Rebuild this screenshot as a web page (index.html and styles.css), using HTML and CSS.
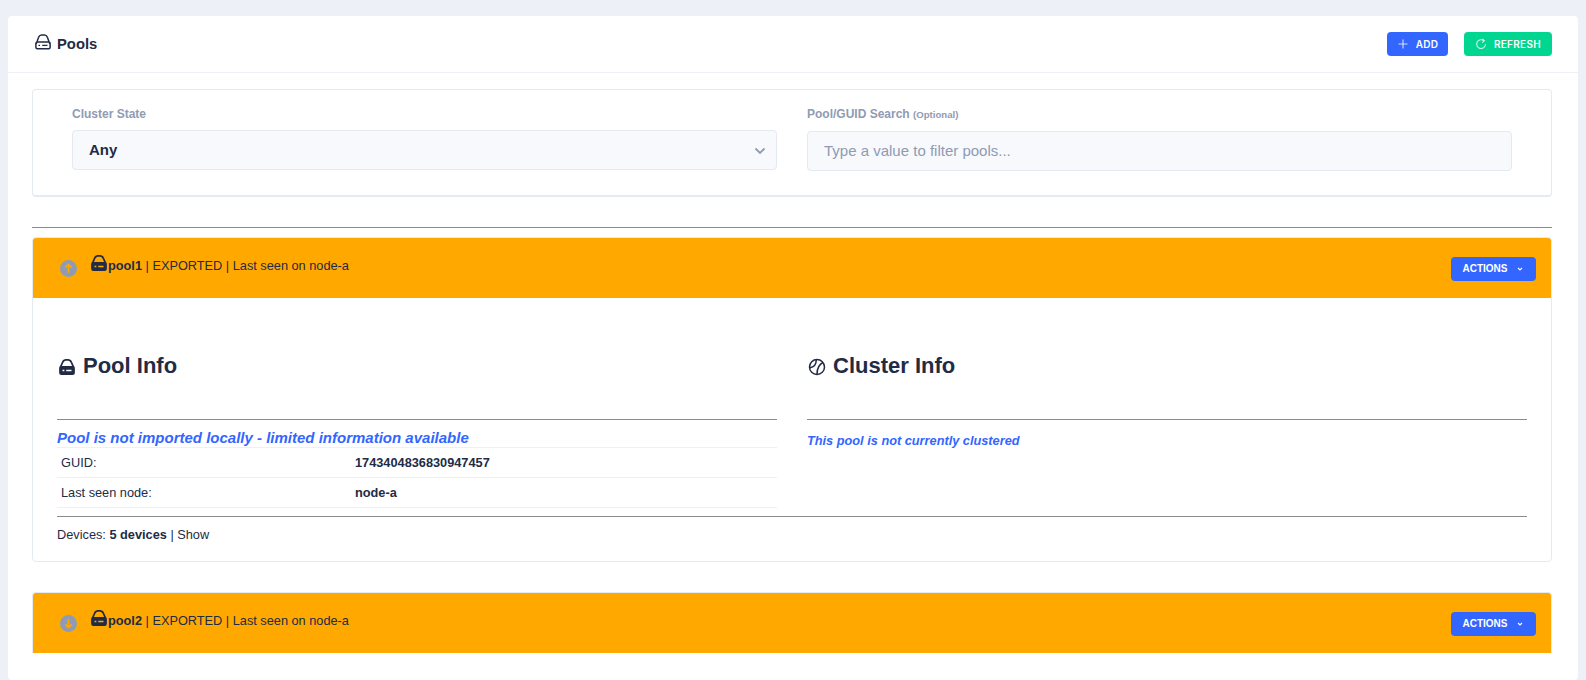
FILE: index.html
```html
<!DOCTYPE html>
<html lang="en">
<head>
<meta charset="utf-8">
<title>Pools</title>
<link rel="stylesheet" href="styles.css">
</head>
<body>
<svg class="defs" width="0" height="0" aria-hidden="true">
  <symbol id="drive-o" viewBox="0 0 24 24">
    <path fill="none" stroke="currentColor" stroke-width="2" d="M3 14.500 6 6A5 5 0 0 1 10 2.500h4A5 5 0 0 1 18 6L21 14.500M4.500 12h15a2 2 0 0 1 2 2v5a2 2 0 0 1-2 2h-15a2 2 0 0 1-2-2v-5a2 2 0 0 1 2-2Z"/>
    <path fill="currentColor" d="M6 15.700h2v1.600H6zM11 15.700h7v1.600h-7z"/>
  </symbol>
  <symbol id="drive-f" viewBox="0 0 24 24">
    <path fill="none" stroke="currentColor" stroke-width="2.400" d="M3 13 6 6A5 5 0 0 1 10 2.500h4A5 5 0 0 1 18 6L21 13"/>
    <path fill="currentColor" fill-rule="evenodd" d="M4.500 10.500h15a3 3 0 0 1 3 3v6a3 3 0 0 1-3 3h-15a3 3 0 0 1-3-3v-6a3 3 0 0 1 3-3Zm1.500 5.200v1.800h2.500v-1.800Zm5 0v1.800h7v-1.800Z"/>
  </symbol>
</svg>
<main class="shell">
  <header class="shell-head">
    <h1 class="page-title"><svg class="ico-title"><use href="#drive-o"/></svg>Pools</h1>
    <div class="head-actions">
      <button class="btn btn-blue btn-add"><svg class="btn-ico" viewBox="0 0 12 12"><path d="M6 1.500v9M1.500 6h9"/></svg>ADD</button>
      <button class="btn btn-green btn-refresh"><svg class="btn-ico btn-ico-r" viewBox="0 0 12 12"><path d="M10.500 6.200A4.400 4.400 0 1 1 8.900 2.700"/><path d="M7.400 .8 9.300 2.800 7.300 4.600"/></svg>REFRESH</button>
    </div>
  </header>

  <div class="shell-body">
    <section class="filters">
      <div class="field">
        <label class="field-label">Cluster State</label>
        <div class="select"><span class="select-value">Any</span><svg class="chev" viewBox="0 0 12 12"><path d="M1.500 3.500 6 8 10.500 3.500"/></svg></div>
      </div>
      <div class="field field-search">
        <label class="field-label">Pool/GUID Search <small>(Optional)</small></label>
        <div class="input"><span class="input-hint">Type a value to filter pools...</span></div>
      </div>
    </section>

    <hr class="rule rule-top">

    <article class="pool">
      <div class="pool-bar">
        <span class="toggle"><svg viewBox="0 0 16 16"><path d="M8 12V4.500M5 7.200 8 4.200 11 7.200"/></svg></span>
        <span class="pool-line"><svg class="ico-pool"><use href="#drive-f"/></svg><b>pool1</b> | EXPORTED | Last seen on node-a</span>
        <button class="btn btn-blue btn-actions">ACTIONS<svg class="btn-chev" viewBox="0 0 10 10"><path d="M3 4 5 6 7 4"/></svg></button>
      </div>
      <div class="pool-body">
        <div class="cols">
          <div class="col">
            <h2 class="col-title"><svg class="ico-h"><use href="#drive-f"/></svg>Pool Info</h2>
            <hr class="rule">
            <div class="note note-lg">Pool is not imported locally - limited information available</div>
            <table class="info">
              <tr><td>GUID:</td><td><b>1743404836830947457</b></td></tr>
              <tr><td>Last seen node:</td><td><b>node-a</b></td></tr>
            </table>
          </div>
          <div class="col">
            <h2 class="col-title"><svg class="ico-h ico-c" viewBox="0 0 24 24"><circle cx="12" cy="12" r="10"/><path d="M11 2.500C11 8 8 12 2.500 13M20 6C14 9 12 15 12 21.500"/></svg>Cluster Info</h2>
            <hr class="rule">
            <div class="note">This pool is not currently clustered</div>
          </div>
        </div>
        <hr class="rule rule-devices">
        <p class="devices">Devices: <b>5 devices</b> | Show</p>
      </div>
    </article>

    <article class="pool pool-closed">
      <div class="pool-bar">
        <span class="toggle"><svg viewBox="0 0 16 16"><path d="M8 4v7.500M5 8.800 8 11.800 11 8.800"/></svg></span>
        <span class="pool-line"><svg class="ico-pool"><use href="#drive-f"/></svg><b>pool2</b> | EXPORTED | Last seen on node-a</span>
        <button class="btn btn-blue btn-actions">ACTIONS<svg class="btn-chev" viewBox="0 0 10 10"><path d="M3 4 5 6 7 4"/></svg></button>
      </div>
    </article>
  </div>
</main>
</body>
</html>
```
FILE: styles.css
```css
* { box-sizing: border-box; }
html, body { height: 100%; margin: 0; overflow: hidden; }
body {
  background: #edf1f7;
  color: #222b45;
  font-family: "Liberation Sans", Arial, sans-serif;
  padding: 16px 8px 0;
}
.defs { position: absolute; }
.shell { background: #fff; border-radius: 4px; height: 100%; box-shadow: 0 0 1px #e4e9f2; }
.shell-head {
  height: 57px;
  padding: 0 26px;
  display: flex;
  align-items: center;
  justify-content: space-between;
  border-bottom: 1px solid #edf1f7;
}
.page-title { margin: 0; font-size: 14.800px; font-weight: 700; display: flex; align-items: center; }
.ico-title { width: 18px; height: 18px; margin-right: 5px; margin-top: -4px; color: #222b45; }
.head-actions { display: flex; gap: 16px; margin-bottom: 0; }
.btn {
  height: 24px;
  border: 0;
  border-radius: 4px;
  color: #fff;
  font-family: Inter, "Liberation Sans", sans-serif;
  font-size: 10px;
  font-weight: 600;
  letter-spacing: .3px;
  padding: 0;
  display: inline-flex;
  align-items: center;
  justify-content: center;
}
.btn-blue { background: #3366ff; }
.btn-green { background: #00d68f; }
.btn-add { width: 61px; }
.btn-refresh { width: 88px; }
.btn-ico { width: 12px; height: 12px; margin-right: 7px; fill: none; stroke: rgba(255,255,255,.8); stroke-width: 1.100; }
.shell-body { padding: 16px 26px 0 24px; }
.filters {
  height: 108px;
  border: 1px solid #e4e9f2;
  border-bottom-width: 2px;
  border-radius: 4px;
  padding: 16px 39px 0;
  display: grid;
  grid-template-columns: 705px 705px;
  column-gap: 30px;
}
.field-label { display: block; font-size: 12px; font-weight: 700; color: #8f9bb3; line-height: 16px; margin-bottom: 8px; }
.field-label small { font-size: 9.600px; }
.select, .input {
  height: 40px;
  background: #f7f9fc;
  border: 1px solid #e4e9f2;
  border-radius: 4px;
  padding: 0 16px;
  display: flex;
  align-items: center;
  font-size: 15px;
}
.select { font-weight: 700; justify-content: space-between; }
.select-value { margin-top: -2px; }
.input { color: #8f9bb3; margin-top: 1px; }
.input-hint { margin-top: -2px; }
.chev { width: 12px; height: 12px; fill: none; stroke: #8f9bb3; stroke-width: 1.800; margin: 2px -6px 0 0; }
.rule { border: 0; border-top: 1px solid #8c8c8c; margin: 0; }
.rule-top { margin: 30px 0 9px; }
.pool { border: 1px solid #e4e9f2; border-radius: 4px; overflow: hidden; }
.pool-bar {
  height: 60px;
  background: #ffa900;
  display: flex;
  align-items: center;
  padding: 0 15px 0 27px;
  font-size: 12.750px;
}
.toggle {
  width: 17px;
  height: 17px;
  border-radius: 50%;
  background: #8f9bb3;
  margin-right: 13px;
  flex: none;
}
.toggle svg { display: block; width: 17px; height: 17px; fill: none; stroke: #ffa900; stroke-width: 1.500; }
.pool-line { display: flex; align-items: center; white-space: pre; margin-top: -6px; color: #222b45; }
.ico-pool { width: 18px; height: 18px; margin-top: -4px; color: #222b45; }
.btn-actions {
  width: 85px;
  margin: 1px 0 0 auto;
  font-family: "Liberation Sans", Arial, sans-serif;
  font-weight: 700;
  letter-spacing: 0;
}
.btn-chev { width: 10px; height: 10px; margin-left: 7px; fill: none; stroke: #fff; stroke-width: 1.100; }
.pool-body { height: 263px; padding: 0 24px; }
.cols { display: grid; grid-template-columns: 720px 720px; column-gap: 30px; height: 218px; }
.col-title { margin: 0; height: 121px; padding-top: 55px; font-size: 22px; line-height: 26px; font-weight: 700; display: flex; align-items: flex-start; }
.ico-h { width: 18px; height: 18px; margin: 5px 7px 0 1px; flex: none; }
.ico-c { fill: none; stroke: #222b45; stroke-width: 2; }
.note { color: #3366ff; font-style: italic; font-weight: 700; font-size: 12.750px; line-height: 16px; margin-top: 13px; }
.note-lg { font-size: 15px; line-height: 19px; margin-top: 8px; }
.info { width: 100%; border-collapse: collapse; font-size: 12.750px; }
.info td { border: solid #edf1f7; border-width: 1px 0; height: 30px; padding: 0 4px; }
.info td:first-child { width: 294px; }
.rule-devices { margin-top: 0; }
.devices { margin: 10px 0 0; font-size: 12.750px; line-height: 16px; }
.pool-closed { margin-top: 30px; border-bottom: 0; border-radius: 4px 4px 0 0; }
```
